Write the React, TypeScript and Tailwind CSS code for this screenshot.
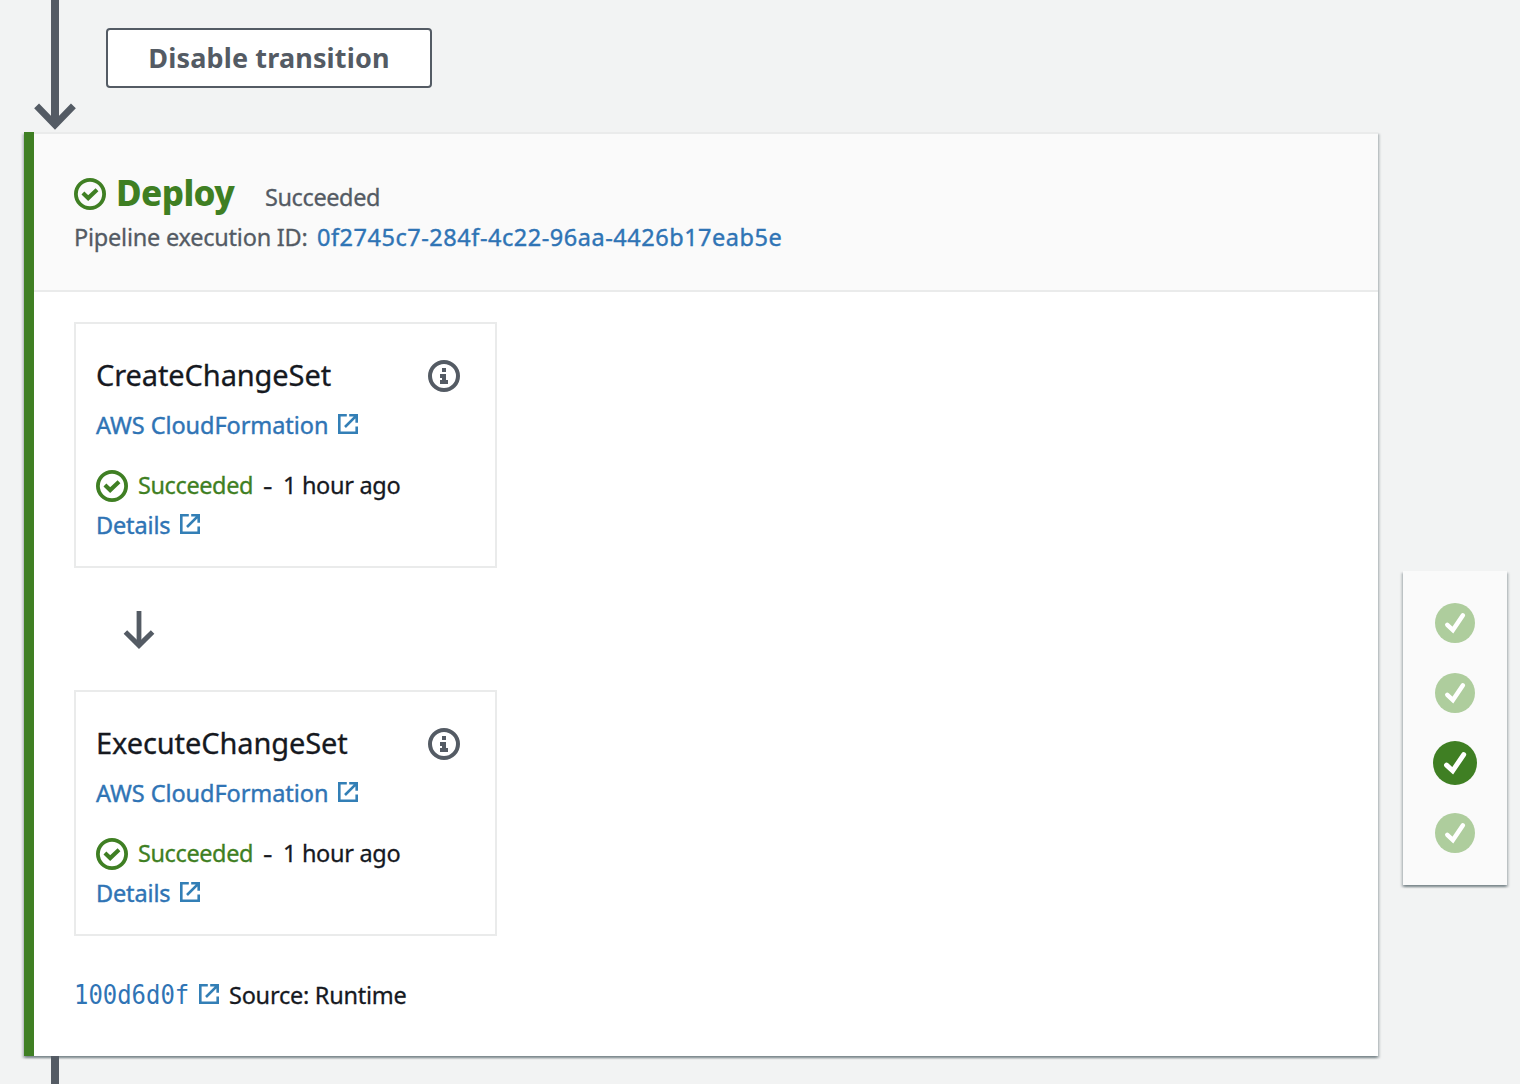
import React from 'react';

const LINK = 'text-[#2f74b5] [-webkit-text-stroke:0.4px]';
const BODY = '[-webkit-text-stroke:0.3px]';

function CheckRing({ className = '' }: { className?: string }) {
  return (
    <svg viewBox="0 0 32 32" className={`size-8 shrink-0 text-[#3f7f23] ${className}`} fill="none" stroke="currentColor">
      <circle cx="16" cy="16" r="14.1" strokeWidth="3.8" />
      <path d="M8.9 15 14.2 20.1 23 11.8" strokeWidth="4.1" />
    </svg>
  );
}

function InfoRing() {
  return (
    <svg viewBox="0 0 32 32" className="mt-0.5 size-8 shrink-0 text-[#545b64]">
      <circle cx="16" cy="16" r="14" fill="none" stroke="currentColor" strokeWidth="4" />
      <path d="M14 8h4v4h-4zM12 14h6v6h2v4h-8v-4h2v-2h-2z" fill="currentColor" />
    </svg>
  );
}

function ExternalIcon() {
  return (
    <svg viewBox="0 0 20 20" className="mb-0.5 size-5 shrink-0 text-[#337fb6]" fill="none" stroke="currentColor" strokeWidth="2.6">
      <path d="M8.8 1.3H1.3V18.7H18.7V12.4" />
      <path d="M11.2 1.3H18.7V8.8M18.4 1.6 7 13" />
    </svg>
  );
}

function NavDot({ active }: { active?: boolean }) {
  return (
    <svg viewBox="0 0 40 40" className={active ? 'size-11 -my-0.5 text-[#3f7f23]' : 'size-10 text-[#aecd9d]'}>
      <circle cx="20" cy="20" r="20" fill="currentColor" />
      <path d="M12.3 21.9 17.9 27.1 27.9 12.3" fill="none" stroke="#fff" strokeWidth="4.5" strokeLinecap="round" />
    </svg>
  );
}

function ActionCard({ name }: { name: string }) {
  return (
    <div className="h-[246px] w-[423px] border-2 border-[#eaebeb] bg-white pt-[31px] pr-[35px] pl-5">
      <div className="flex h-10 items-center justify-between">
        <h3 className={`text-[29px] tracking-[-0.1px] ${BODY}`}>{name}</h3>
        <InfoRing />
      </div>
      <div className={`mt-2.5 flex h-10 items-center ${LINK}`}>
        <span className="w-[242px] tracking-[-0.07px]">AWS CloudFormation</span>
        <ExternalIcon />
      </div>
      <div className="mt-5 flex h-10 items-center">
        <CheckRing className="mt-0.5" />
        <span className={`ml-2.5 w-[125px] tracking-[-0.4px] text-[#3f7f23] ${BODY}`}>Succeeded</span>
        <span className={`w-5 origin-left scale-x-125 ${BODY}`}>-</span>
        <span className={`tracking-[-0.32px] ${BODY}`}>1 hour ago</span>
      </div>
      <div className={`flex h-10 items-center ${LINK}`}>
        <span className="w-[84px] tracking-[-0.15px]">Details</span>
        <ExternalIcon />
      </div>
    </div>
  );
}

const SHADOW =
  'shadow-[0_2px_2px_0_rgba(0,28,36,0.3),2px_2px_2px_0_rgba(0,28,36,0.15),-2px_2px_2px_0_rgba(0,28,36,0.15)]';

export default function App() {
  return (
    <div className="flex h-[1084px] w-[1520px] overflow-hidden bg-[#f2f3f3] pl-6 font-['Noto_Sans',sans-serif] text-[23.5px] leading-10 whitespace-nowrap text-[#16191f]">
      <div className="flex w-[1354px] flex-col">
        <div className="flex h-[132px] shrink-0">
          <svg viewBox="0 0 62 132" className="h-[132px] w-[62px]" fill="none" stroke="#545b64">
            <path d="M31 0V124" strokeWidth="8" />
            <path d="M12.6 105.9 31 124.8 49.4 105.9" strokeWidth="6.8" />
          </svg>
          <button className="mt-7 ml-5 flex h-[60px] w-[326px] items-center justify-center rounded-[4px] border-2 border-[#545b64] bg-white text-[27px] font-bold tracking-[0.15px] text-[#545b64]">
            Disable transition
          </button>
        </div>

        <section className={`flex h-[924px] shrink-0 border-l-[10px] border-[#3f7f23] bg-white ${SHADOW}`}>
          <div className="flex flex-1 flex-col">
            <header className="h-40 border-t-2 border-b-2 border-[#eaebeb] bg-[#fafafa] pt-[37px] pl-10 text-[#545b64]">
              <div className="flex h-[43px] items-center">
                <CheckRing className="mt-0.5" />
                <h2 className="ml-2.5 w-[149px] text-[35px] font-extrabold tracking-[-0.6px] text-[#3f7f23]">Deploy</h2>
                <span className={`mt-2 tracking-[-0.4px] ${BODY}`}>Succeeded</span>
              </div>
              <div className="mt-[3px] flex h-10 items-center">
                <span className={`w-[243px] tracking-[-0.23px] ${BODY}`}>Pipeline execution ID:</span>
                <span className={`tracking-[0.53px] ${LINK}`}>0f2745c7-284f-4c22-96aa-4426b17eab5e</span>
              </div>
            </header>

            <div className="flex flex-col pt-[30px] pl-10">
              <ActionCard name="CreateChangeSet" />
              <svg viewBox="0 0 122 122" className="size-[122px]" fill="none" stroke="#545b64">
                <path d="M65 43V78" strokeWidth="4.8" />
                <path d="M51.4 64 65 77.4 78.6 64" strokeWidth="5" />
              </svg>
              <ActionCard name="ExecuteChangeSet" />
              <div className="mt-[39px] flex h-10 items-center">
                <span className="w-[125px] origin-left scale-x-[0.92] font-['DejaVu_Sans_Mono',monospace] text-[26px] text-[#2f74b5]">
                  100d6d0f
                </span>
                <ExternalIcon />
                <span className={`ml-2.5 tracking-[-0.25px] ${BODY}`}>Source: Runtime</span>
              </div>
            </div>
          </div>
        </section>
        <div className="ml-[27px] w-2 flex-1 bg-[#545b64]" />
      </div>

      <nav className={`mt-[571px] ml-[25px] flex h-[314px] w-[104px] flex-col items-center gap-[30px] bg-[#fafafa] pt-8 ${SHADOW}`}>
        <NavDot />
        <NavDot />
        <NavDot active />
        <NavDot />
      </nav>
    </div>
  );
}
